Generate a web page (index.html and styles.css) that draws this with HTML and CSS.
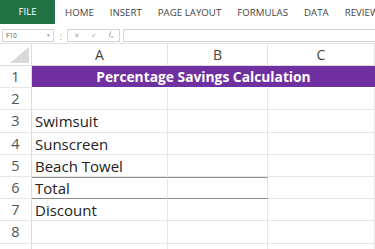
FILE: index.html
```html
<!DOCTYPE html>
<html lang="en">
<head>
    <meta charset="UTF-8">
    <meta name="viewport" content="width=device-width, initial-scale=1.0">
    <title>Percentage Savings</title>
    <link rel="stylesheet" href="styles.css">
</head>
<body>
    <div class="ribbon">
        <div class="tab file">FILE</div>
        <div class="tab">HOME</div>
        <div class="tab">INSERT</div>
        <div class="tab">PAGE LAYOUT</div>
        <div class="tab">FORMULAS</div>
        <div class="tab">DATA</div>
        <div class="tab">REVIEW</div>
    </div>

    <div class="formula-bar">
        <div class="name-box"><span>F10</span><span class="arrow">&#9662;</span></div>
        <div class="dots">&#8942;</div>
        <div class="fx-box"><span>&#10005;</span><span>&#10003;</span><span class="fx">f<sub>x</sub></span></div>
        <div class="formula-input"></div>
    </div>

    <div class="sheet">
        <div class="corner"><div class="triangle"></div></div>
        <div class="col-head">A</div>
        <div class="col-head">B</div>
        <div class="col-head">C</div>

        <div class="row-head">1</div>
        <div class="title">Percentage Savings Calculation</div>

        <div class="row-head">2</div>
        <div class="cell"></div><div class="cell"></div><div class="cell"></div>

        <div class="row-head">3</div>
        <div class="cell">Swimsuit</div><div class="cell"></div><div class="cell"></div>

        <div class="row-head">4</div>
        <div class="cell">Sunscreen</div><div class="cell"></div><div class="cell"></div>

        <div class="row-head">5</div>
        <div class="cell">Beach Towel</div><div class="cell"></div><div class="cell"></div>

        <div class="row-head">6</div>
        <div class="cell total">Total</div><div class="cell total"></div><div class="cell"></div>

        <div class="row-head">7</div>
        <div class="cell">Discount</div><div class="cell"></div><div class="cell"></div>

        <div class="row-head">8</div>
        <div class="cell"></div><div class="cell"></div><div class="cell"></div>

        <div class="row-head"></div>
        <div class="cell"></div><div class="cell"></div><div class="cell"></div>
    </div>
</body>
</html>
```

FILE: styles.css
```css
body {
    margin: 0;
    background: #fff;
    font-family: "Open Sans", "Noto Sans", sans-serif;
    overflow: hidden;
    height: 249px;
}

.ribbon {
    display: flex;
    height: 24px;
    align-items: center;
}
.tab {
    flex-shrink: 0;
    font-size: 9.7px;
    color: #444;
    margin-right: 16px;
    white-space: nowrap;
}
.tab.file {
    background: #217346;
    color: #fff;
    width: 55px;
    height: 24px;
    line-height: 24px;
    text-align: center;
    margin-right: 10px;
}

.formula-bar {
    display: flex;
    align-items: center;
    height: 14px;
    margin-top: 4px;
    padding-left: 2px;
    padding-bottom: 1px;
    border-bottom: 1px solid #e4e4e4;
}
.name-box {
    flex-shrink: 0;
    width: 52px;
    height: 13px;
    border: 1px solid #d4d4d4;
    font-size: 6.5px;
    color: #555;
    display: flex;
    align-items: center;
    justify-content: space-between;
    padding: 0 3px;
    box-sizing: border-box;
}
.name-box .arrow {
    font-size: 5px;
    color: #888;
}
.dots {
    width: 13px;
    text-align: center;
    font-size: 8px;
    color: #aaa;
}
.fx-box {
    flex-shrink: 0;
    width: 53px;
    height: 13px;
    border: 1px solid #d4d4d4;
    box-sizing: border-box;
    display: flex;
    align-items: center;
    justify-content: space-around;
    font-size: 7px;
    color: #aaa;
    margin-right: 3px;
}
.fx-box .fx {
    font-family: "Liberation Serif", serif;
    font-style: italic;
    color: #777;
}
.fx-box sub {
    font-size: 5px;
}
.formula-input {
    flex: 1;
    height: 13px;
    border: 1px solid #d4d4d4;
    border-right: none;
    box-sizing: border-box;
}

.sheet {
    display: grid;
    grid-template-columns: 32px 136px 100px 1fr;
    grid-template-rows: 22px;
    grid-auto-rows: 22.2px;
}
.corner {
    position: relative;
    border-right: 1px solid #dcdcdc;
    border-bottom: 1px solid #dcdcdc;
}
.triangle {
    position: absolute;
    right: 2px;
    bottom: 2px;
    width: 0;
    height: 0;
    border-left: 19px solid transparent;
    border-bottom: 16px solid #d9d9d9;
}
.col-head {
    font-size: 14px;
    color: #444;
    text-align: center;
    line-height: 22px;
    border-right: 1px solid #e1e1e1;
    border-bottom: 1px solid #dcdcdc;
}
.row-head {
    font-size: 14.5px;
    color: #555;
    text-align: center;
    line-height: 22px;
    border-right: 1px solid #dcdcdc;
    border-bottom: 1px solid #e6e6e6;
}
.title {
    grid-column: 2 / 5;
    background: #7030a0;
    color: #fff;
    font-weight: bold;
    font-size: 13.8px;
    line-height: 22px;
    text-align: center;
    margin-bottom: 1px;
}
.cell {
    font-size: 15px;
    color: #222;
    line-height: 22px;
    padding-left: 3px;
    border-right: 1px solid #e6e6e6;
    border-bottom: 1px solid #e6e6e6;
    white-space: nowrap;
}
.cell.total {
    border-top: 1px solid #8c8c8c;
    border-bottom: 1px solid #8c8c8c;
    line-height: 20px;
}
```
